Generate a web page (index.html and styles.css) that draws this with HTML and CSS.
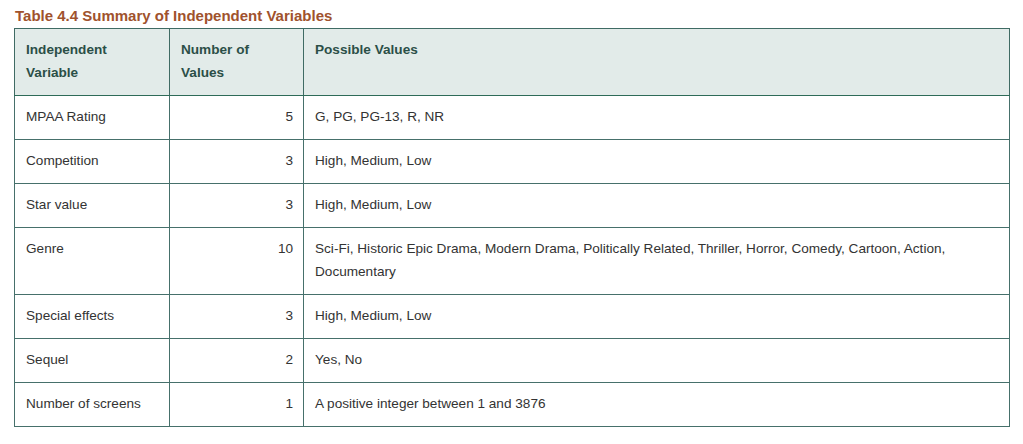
FILE: index.html
```html
<!DOCTYPE html>
<html lang="en">
<head>
<meta charset="utf-8">
<title>Table 4.4</title>
<link rel="stylesheet" href="styles.css">
</head>
<body>
<div class="wrap">
  <div class="caption">Table 4.4 Summary of Independent Variables</div>
  <table class="summary">
    <colgroup>
      <col class="c1"><col class="c2"><col class="c3">
    </colgroup>
    <thead>
      <tr>
        <th>Independent<br>Variable</th>
        <th>Number of<br>Values</th>
        <th>Possible Values</th>
      </tr>
    </thead>
    <tbody>
      <tr><td>MPAA Rating</td><td class="num">5</td><td>G, PG, PG-13, R, NR</td></tr>
      <tr><td>Competition</td><td class="num">3</td><td>High, Medium, Low</td></tr>
      <tr><td>Star value</td><td class="num">3</td><td>High, Medium, Low</td></tr>
      <tr><td>Genre</td><td class="num">10</td><td>Sci-Fi, Historic Epic Drama, Modern Drama, Politically Related, Thriller, Horror, Comedy, Cartoon, Action, Documentary</td></tr>
      <tr><td>Special effects</td><td class="num">3</td><td>High, Medium, Low</td></tr>
      <tr><td>Sequel</td><td class="num">2</td><td>Yes, No</td></tr>
      <tr><td>Number of screens</td><td class="num">1</td><td>A positive integer between 1 and 3876</td></tr>
    </tbody>
  </table>
</div>
</body>
</html>
```
FILE: styles.css
```css
html, body {
  margin: 0;
  padding: 0;
  background: #ffffff;
}
body {
  font-family: "Liberation Sans", Arial, sans-serif;
  color: #333333;
}
.wrap {
  padding: 6px 14px 0 14px;
}
.caption {
  font-size: 15px;
  font-weight: bold;
  color: #a0522d;
  line-height: 20px;
  margin: 0 0 2px 1px;
}
.summary {
  border-collapse: collapse;
  width: 996px;
  table-layout: fixed;
  font-size: 13.6px;
  line-height: 23px;
  border: 1px solid #2e6552;
}
.c1 { width: 155px; }
.c2 { width: 134px; }
.c3 { width: auto; }
.summary th {
  background: #e2ebe9;
  color: #2b4f47;
  font-weight: bold;
  text-align: left;
  vertical-align: top;
  padding: 9px 10px 11px 11px;
  border: 1px solid #3f6b64;
  border-bottom-color: #2e6b58;
}
.summary td {
  vertical-align: top;
  padding: 9px 10px 11px 11px;
  border: 1px solid #46706b;
}
.summary td.num {
  text-align: right;
}
```
